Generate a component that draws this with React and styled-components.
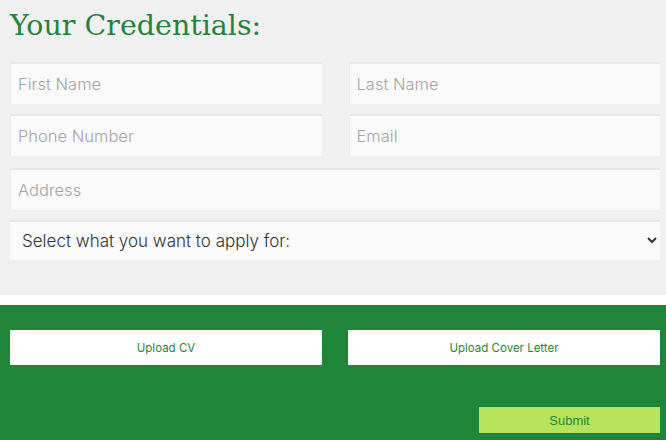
import React from 'react'
import styled, { createGlobalStyle } from 'styled-components'

const Global = createGlobalStyle`
    body {
        margin: 0;
        background: #ffffff;
        font-family: Inter, "Open Sans", sans-serif;
    }
`;

const Credentials = styled.section`
    background-color: #f0f0f0;
    padding: 6px 6px 35px 10px;
    h1 {
        margin: 0 0 16px 0;
        font-family: "DejaVu Serif", "Liberation Serif", serif;
        font-weight: normal;
        font-size: 28.5px;
        line-height: 40px;
        color: #1f8639;
    }
`;

const Fields = styled.div`
    display: grid;
    grid-template-columns: 1fr 1fr;
    column-gap: 27px;
    row-gap: 10px;
`;

const Field = styled.input`
    grid-column: ${props => props.wide ? '1 / span 2' : 'auto'};
    box-sizing: border-box;
    height: 42px;
    margin-top: ${props => props.wide ? '2px' : '0'};
    padding: 0 7px;
    border: none;
    border-top: 2px solid #e6e6e6;
    border-left: 1px solid #ececec;
    background-color: #fafafa;
    font-family: Inter, "Open Sans", sans-serif;
    font-size: 16.5px;
    color: #333;
    outline: none;
    &::placeholder {
        color: #a4a4a4;
        font-weight: 300;
    }
`;

const Choice = styled.select`
    grid-column: 1 / span 2;
    box-sizing: border-box;
    height: 40px;
    padding: 0 8px;
    border: none;
    border-top: 2px solid #e6e6e6;
    background-color: #fafafa;
    font-family: Inter, "Open Sans", sans-serif;
    font-size: 17px;
    font-weight: 300;
    color: #333;
    outline: none;
`;

const Divider = styled.div`
    height: 10px;
    background: #ffffff;
`;

const Uploads = styled.section`
    background-color: #1f8639;
    padding: 25px 6px 7px 10px;
`;

const UploadRow = styled.div`
    display: grid;
    grid-template-columns: 1fr 1fr;
    column-gap: 26px;
`;

const UploadButton = styled.button`
    height: 35px;
    border: none;
    background: #ffffff;
    color: #1f8639;
    font-family: Inter, "Open Sans", sans-serif;
    font-size: 11.5px;
    cursor: pointer;
`;

const SubmitRow = styled.div`
    display: flex;
    justify-content: flex-end;
    margin-top: 42px;
`;

const Submit = styled.button`
    width: 181px;
    height: 26px;
    border: none;
    background: #b5e35a;
    color: #1f8639;
    font-family: "Liberation Sans", Arial, sans-serif;
    font-size: 13px;
    cursor: pointer;
`;

export default function App() {
    return (
        <>
            <Global />
            <Credentials>
                <h1>Your Credentials:</h1>
                <Fields>
                    <Field placeholder="First Name" />
                    <Field placeholder="Last Name" />
                    <Field placeholder="Phone Number" />
                    <Field placeholder="Email" />
                    <Field wide placeholder="Address" />
                    <Choice defaultValue="">
                        <option value="">Select what you want to apply for:</option>
                    </Choice>
                </Fields>
            </Credentials>
            <Divider />
            <Uploads>
                <UploadRow>
                    <UploadButton>Upload CV</UploadButton>
                    <UploadButton>Upload Cover Letter</UploadButton>
                </UploadRow>
                <SubmitRow>
                    <Submit>Submit</Submit>
                </SubmitRow>
            </Uploads>
        </>
    )
}
